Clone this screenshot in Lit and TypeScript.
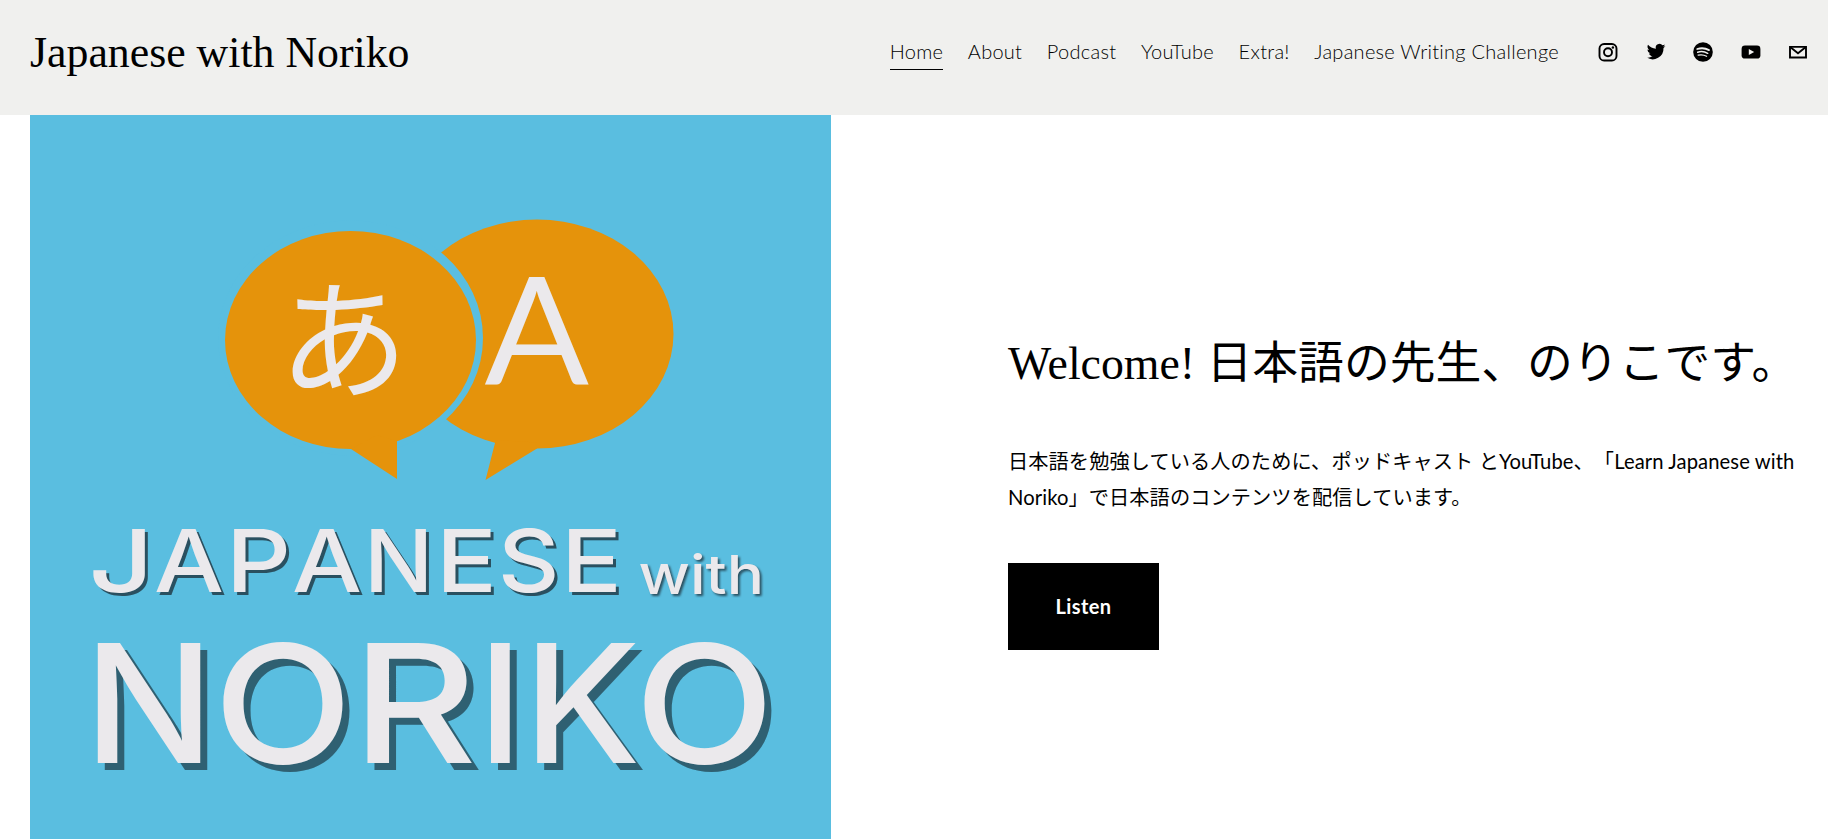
import { LitElement, html, svg, css, TemplateResult } from 'lit';
import { customElement, property } from 'lit/decorators.js';

const NAV_ITEMS = ['Home', 'About', 'Podcast', 'YouTube', 'Extra!', 'Japanese Writing Challenge'];

const ICONS: Record<string, TemplateResult> = {
    Instagram: svg`
        <rect x="1.5" y="2" width="17" height="16.5" rx="4.6" fill="none" stroke="#000" stroke-width="1.9"/>
        <circle cx="10" cy="10.3" r="4" fill="none" stroke="#000" stroke-width="1.9"/>
        <circle cx="14.9" cy="5.5" r="1.2"/>`,
    Twitter: svg`<path d="M19.4 3.9c-.7.3-1.4.5-2.2.6.8-.5 1.4-1.2 1.7-2.1-.7.4-1.6.8-2.4.9a3.8 3.8 0 0 0-6.6 3.5C6.7 6.6 3.9 5.1 2 2.8c-1 1.7-.5 3.9 1.2 5.1-.6 0-1.2-.2-1.7-.5 0 1.8 1.2 3.5 3.1 3.9-.5.1-1.1.2-1.7.1.5 1.5 1.9 2.6 3.6 2.6A7.7 7.7 0 0 1 .8 15.6 10.9 10.9 0 0 0 17.5 5.9c.8-.6 1.4-1.2 1.9-2z"/>`,
    Spotify: svg`
        <circle cx="10" cy="10" r="9.8"/>
        <g fill="none" stroke="#f0f0ee" stroke-linecap="round">
            <path d="M4.2 7c3.8-1.1 8.4-.8 11.8 1.1" stroke-width="1.8"/>
            <path d="M4.7 10.2c3.3-1 7-.6 10 1.1" stroke-width="1.5"/>
            <path d="M5.1 13.2c2.8-.7 5.9-.4 8.5 1.1" stroke-width="1.2"/>
        </g>`,
    YouTube: svg`
        <rect x=".6" y="3.6" width="18.8" height="13" rx="3.4"/>
        <path d="M7.8 7v6.100l5.400-3z" fill="#f0f0ee"/>`,
    Email: svg`
        <path d="M2 4.900h16v10.600H2z" fill="none" stroke="#000" stroke-width="1.9"/>
        <path d="M2.500 5.300l7.500 6 7.500-6" fill="none" stroke="#000" stroke-width="1.9"/>`
};

// letter, left edge, width
type Letter = [string, number, number];

const TOP_LETTERS: Letter[] = [
    ['J', 88.5, 65.5],
    ['A', 154, 70],
    ['P', 226, 65],
    ['A', 292, 70],
    ['N', 364, 69.3],
    ['E', 436, 61],
    ['S', 498, 61.4],
    ['E', 561, 61]
];

const NAME_LETTERS: Letter[] = [
    ['N', 84, 130],
    ['O', 213.5, 139],
    ['R', 352, 125],
    ['I', 477.5, 45.7],
    ['K', 523.5, 117],
    ['O', 634.5, 140]
];

@customElement('social-icon')
export class SocialIcon extends LitElement {

    static styles = css`
        :host {
            display: block;
            width: 20px;
            height: 20px;
        }

        svg {
            display: block;
        }
    `;

    @property() name = '';

    render(): TemplateResult {
        return html`<svg width="20" height="20" viewBox="0 0 20 20" role="img" aria-label=${this.name}>${ICONS[this.name]}</svg>`;
    }
}

@customElement('site-header')
export class SiteHeader extends LitElement {

    static styles = css`
        :host {
            display: flex;
            align-items: flex-start;
            justify-content: space-between;
            box-sizing: border-box;
            height: 115px;
            padding: 0 20px 0 30px;
            background: #f0f0ee;
            color: #000;
        }

        .title {
            margin-top: 27px;
            font: 43.8px/50px "Liberation Serif", serif;
            white-space: nowrap;
        }

        .menu {
            display: flex;
            align-items: flex-start;
            margin-top: 35px;
        }

        .nav {
            display: flex;
            gap: 24.6px;
            margin-right: 39.5px;
            font: 300 20px/33px Lato, sans-serif;
            letter-spacing: 0.27px;
            white-space: nowrap;
        }

        .nav__item {
            box-sizing: border-box;
            height: 35px;
        }

        .nav__item--active {
            border-bottom: 1px solid #000;
        }

        .social {
            display: flex;
            gap: 27.4px;
            margin-top: 7px;
        }
    `;

    render(): TemplateResult {
        return html`
            <div class="title">Japanese with Noriko</div>
            <div class="menu">
                <nav class="nav">
                    ${NAV_ITEMS.map((item, i) => html`<a class="nav__item ${i === 0 ? 'nav__item--active' : ''}">${item}</a>`)}
                </nav>
                <div class="social">
                    ${Object.keys(ICONS).map(name => html`<social-icon name=${name}></social-icon>`)}
                </div>
            </div>
        `;
    }
}

@customElement('podcast-cover')
export class PodcastCover extends LitElement {

    static styles = css`
        :host {
            display: block;
            width: 801px;
            height: 724px;
            background: #5abee0;
        }

        svg {
            display: block;
        }

        .bubble {
            fill: #e5930b;
        }

        .gap {
            fill: #5abee0;
        }

        .letters {
            fill: #ebe9ec;
            font-family: Inter, sans-serif;
        }

        .kana {
            font-family: "Noto Sans CJK JP", sans-serif;
            font-size: 130px;
        }

        .latin {
            font-family: Lato, sans-serif;
            font-size: 150px;
        }

        .top {
            font-size: 86.6px;
            font-weight: 500;
            filter: drop-shadow(3.5px 3.5px 0 #2a5060);
        }

        .with {
            font-size: 54px;
            font-weight: 500;
            filter: drop-shadow(2px 2px 1px #2a5060);
        }

        .name {
            font-size: 164.4px;
            font-weight: 500;
            filter: drop-shadow(7.5px 7.5px 0 #2f6072);
        }
    `;

    renderLetters(letters: Letter[], y: number) {
        return letters.map(([letter, x, width]) => svg`
            <text x=${x} y=${y} textLength=${width} lengthAdjust="spacingAndGlyphs">${letter}</text>`);
    }

    render(): TemplateResult {
        return html`
            <svg width="801" height="724" viewBox="30 115 801 724">
                <ellipse class="bubble" cx="537" cy="334" rx="136.5" ry="114.5"/>
                <ellipse class="gap" cx="350.5" cy="338" rx="132.5" ry="117.5"/>
                <path class="bubble" d="M495 440v3l-9.500 37 51.500-31.500v-6z"/>
                <ellipse class="bubble" cx="350.5" cy="340" rx="125.5" ry="109"/>
                <path class="bubble" d="M351 449l46 30v-38l-20-6z"/>
                <g class="letters">
                    <text class="kana" x="278.5" y="387.5">あ</text>
                    <text class="latin" x="484.5" y="383.5" textLength="104.5" lengthAdjust="spacingAndGlyphs">A</text>
                    <g class="top">${this.renderLetters(TOP_LETTERS, 591.7)}</g>
                    <text class="with" x="638.5" y="593.5" textLength="125.5" lengthAdjust="spacingAndGlyphs">with</text>
                    <g class="name">${this.renderLetters(NAME_LETTERS, 762.5)}</g>
                </g>
            </svg>
        `;
    }
}

@customElement('app-root')
export class AppRoot extends LitElement {

    static styles = css`
        :host {
            display: block;
            height: 839px;
            overflow: hidden;
            background: #fff;
            color: #000;
        }

        .hero {
            display: flex;
            gap: 177px;
            padding-left: 30px;
        }

        .intro {
            flex: 1;
            padding-top: 214px;
        }

        .heading {
            margin: 0;
            font: 400 45.8px/70px "Liberation Serif", "Noto Sans CJK JP", serif;
            white-space: nowrap;
        }

        .welcome {
            letter-spacing: 0;
        }

        .text {
            margin: 44px 0 0;
            font: 400 20.2px/36.4px Lato, "Noto Sans CJK JP", sans-serif;
            letter-spacing: 0.1px;
            text-spacing-trim: space-all;
            white-space: nowrap;
        }

        .button {
            display: block;
            width: 151px;
            height: 87px;
            margin-top: 47px;
            padding: 0;
            border: 0;
            background: #000;
            color: #fff;
            font: 700 20px Lato, sans-serif;
            letter-spacing: 0.4px;
        }
    `;

    render(): TemplateResult {
        return html`
            <site-header></site-header>
            <main class="hero">
                <podcast-cover></podcast-cover>
                <section class="intro">
                    <h1 class="heading"><span class="welcome">Welcome! </span>日本語の先生、のりこです。</h1>
                    <p class="text">
                        日本語を勉強している人のために、ポッドキャスト とYouTube、「Learn Japanese with<br>
                        Noriko」で日本語のコンテンツを配信しています。
                    </p>
                    <button class="button">Listen</button>
                </section>
            </main>
        `;
    }
}

declare global {
    interface HTMLElementTagNameMap {
        'app-root': AppRoot;
        'site-header': SiteHeader;
        'podcast-cover': PodcastCover;
        'social-icon': SocialIcon;
    }
}
